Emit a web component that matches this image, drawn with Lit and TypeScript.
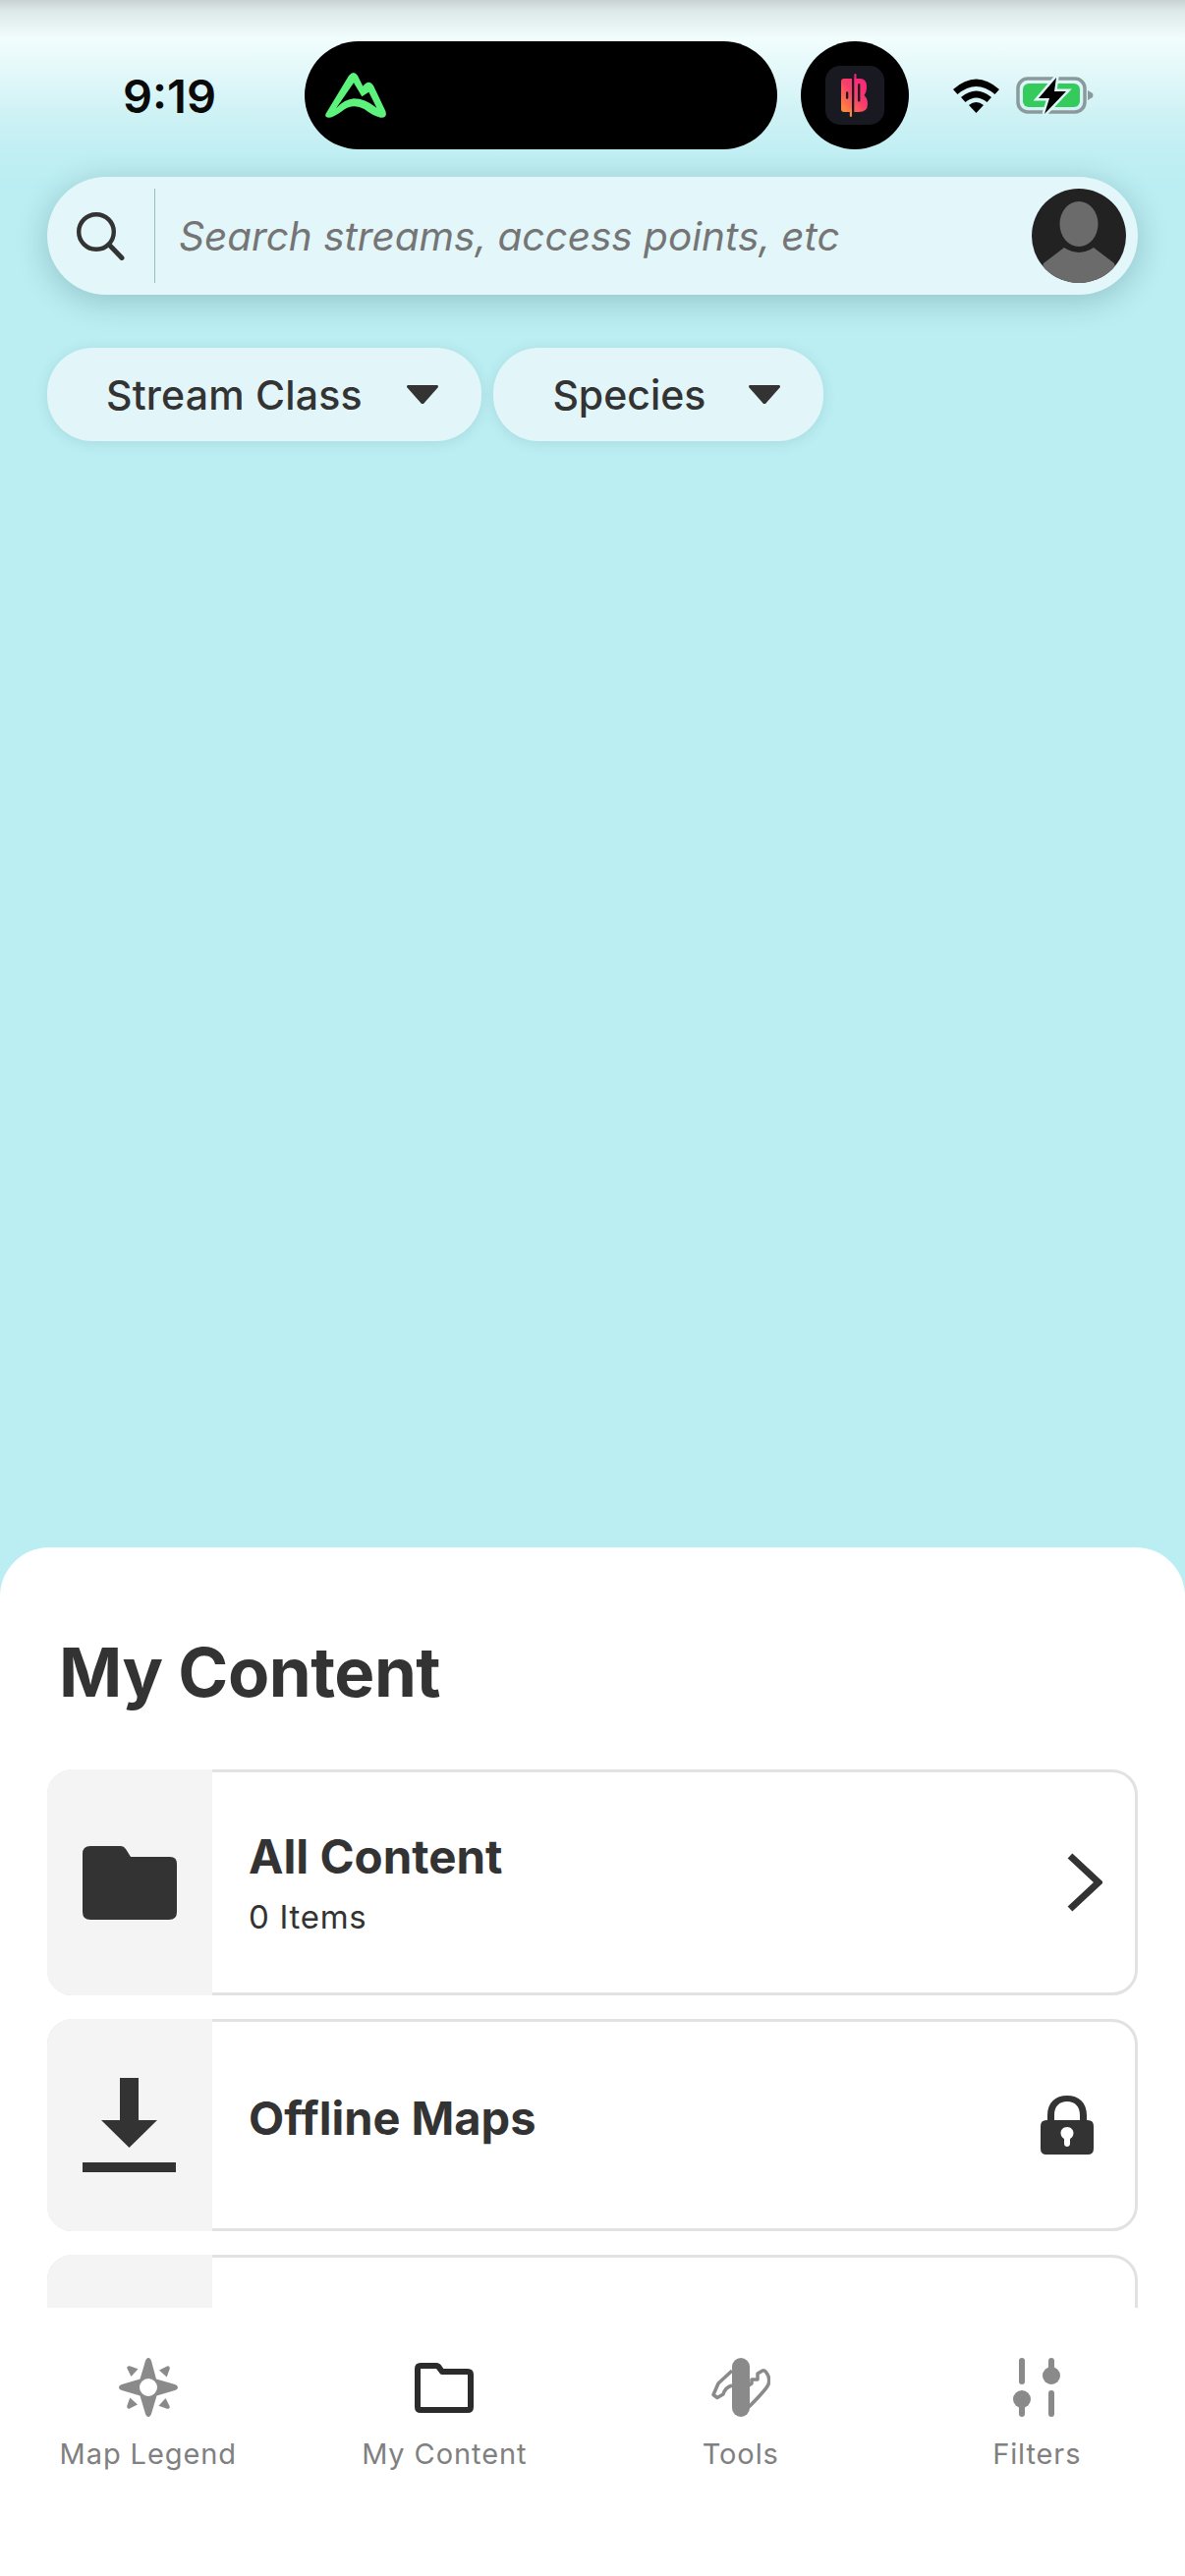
import { LitElement, html, css } from "lit";
import { customElement } from "lit/decorators.js";

@customElement("app-root")
export class AppRoot extends LitElement {
  static styles = css`
    :host {
      display: block;
      width: 1206px;
      height: 2622px;
      overflow: hidden;
      font-family: Inter, "Liberation Sans", sans-serif;
      color: #333;
    }
    svg { display: block; flex: none; }
    .page {
      height: 2622px;
      display: flex;
      flex-direction: column;
      background:
        linear-gradient(180deg, rgba(0,0,0,.17) 0, rgba(0,0,0,.08) 12px, rgba(0,0,0,0) 40px),
        linear-gradient(180deg, #f1fdfd 40px, #e0f7f9 80px, #cff2f5 115px, #c2eff3 150px, #baeef2 190px);
    }
    .status {
      margin-top: 42px;
      height: 110px;
      padding-left: 125px;
      display: flex;
      align-items: center;
      flex: none;
    }
    .time {
      width: 185px;
      font-size: 47px;
      font-weight: 600;
      color: #0a0a0a;
    }
    .island {
      width: 481px;
      height: 110px;
      border-radius: 55px;
      background: #000;
      display: flex;
      align-items: center;
      padding-left: 20px;
      box-sizing: border-box;
    }
    .cam {
      width: 110px;
      height: 110px;
      margin-left: 24px;
      border-radius: 50%;
      background: #000;
      display: flex;
      align-items: center;
      justify-content: center;
    }
    .wifi { margin-left: 45px; }
    .battery { margin-left: 17px; }
    .search {
      flex: none;
      margin: 28px 48px 0;
      height: 120px;
      border-radius: 60px;
      background: #e3f7fa;
      box-shadow: 0 6px 32px rgba(0,40,50,.22);
      display: flex;
      align-items: center;
      padding: 0 12px 0 30px;
    }
    .divider {
      width: 1px;
      height: 96px;
      background: #9dbcc0;
      margin-left: 30px;
    }
    .placeholder {
      flex: 1;
      margin-left: 24px;
      font-size: 40.5px;
      font-style: italic;
      color: #757575;
      white-space: nowrap;
    }
    .avatar { border-radius: 50%; }
    .chips {
      flex: none;
      margin: 54px 48px 0;
      display: flex;
      gap: 12px;
    }
    .chip {
      height: 95px;
      border-radius: 46px;
      background: #e2f6f9;
      box-shadow: 0 2px 14px rgba(0,60,70,.1);
      display: flex;
      align-items: center;
      gap: 45.5px;
      padding: 0 44px 0 60px;
      font-size: 41px;
      font-weight: 500;
      letter-spacing: .2px;
    }
    .chip.tight { gap: 44px; letter-spacing: 0; }
    .spacer { flex: 1; }
    .sheet {
      flex: none;
      height: 1047px;
      background: #fff;
      border-radius: 50px 50px 0 0;
      display: flex;
      flex-direction: column;
      overflow: hidden;
    }
    .content {
      height: 774px;
      overflow: hidden;
      flex: none;
      padding: 0 48px;
      box-sizing: border-box;
    }
    h1 {
      margin: 0;
      padding: 85px 0 0 12px;
      height: 226px;
      box-sizing: border-box;
      font-size: 69px;
      line-height: 85px;
      font-weight: 700;
      letter-spacing: -.5px;
    }
    .card {
      display: flex;
      height: 230px;
      border: 3px solid #e2e2e2;
      border-radius: 26px;
      box-sizing: border-box;
      margin-bottom: 24px;
      position: relative;
      background: #fff;
    }
    .card.short { height: 216px; }
    .thumb {
      width: 168px;
      margin: -3px 0 -3px -3px;
      flex: none;
      background: #f4f4f4;
      border-radius: 26px 0 0 26px;
      display: flex;
      align-items: center;
      justify-content: center;
    }
    .body {
      flex: 1;
      padding-left: 37px;
      display: flex;
      flex-direction: column;
      justify-content: center;
    }
    .title { font-size: 47.5px; font-weight: 700; line-height: 56px; }
    .short .title { margin-top: -14px; font-size: 47px; }
    .sub { font-size: 33px; line-height: 38px; margin-top: 14px; letter-spacing: .7px; }
    .trail {
      flex: none;
      display: flex;
      align-items: center;
    }
    .trail.chev { padding-right: 33px; }
    .trail.lock { padding-right: 42px; }
    .nav {
      flex: 1;
      display: grid;
      grid-template-columns: repeat(4, 1fr);
      padding-top: 51px;
      align-items: start;
    }
    .tab {
      display: flex;
      flex-direction: column;
      align-items: center;
      color: #808080;
      font-size: 29px;
      letter-spacing: .9px;
      line-height: 36px;
      gap: 20px;
    }
  `;

  render() {
    return html`
      <div class="page">
        <div class="status">
          <div class="time">9:19</div>
          <div class="island">
            <svg width="65" height="50" viewBox="90 125 195 150">
              <path fill="#5cf27c" fill-rule="evenodd" d="M96 254 L165 140 Q180 122 192 140 L208 172 Q226 150 240 170 L277 248 Q284 270 262 268 Q240 264 212 242 Q176 222 142 250 Q108 274 96 266 Q91 262 96 254Z M126 240 Q152 212 180 210 Q214 210 250 238 L226 190 L205 204 L180 162Z"/>
            </svg>
          </div>
          <div class="cam">
            <svg width="60" height="60" viewBox="0 0 60 60">
              <defs>
                <linearGradient id="bg" x1="1" y1="0" x2="0" y2="1">
                  <stop offset="0" stop-color="#f7207f"/>
                  <stop offset=".5" stop-color="#f8406a"/>
                  <stop offset="1" stop-color="#fb9438"/>
                </linearGradient>
              </defs>
              <rect width="60" height="60" rx="15" fill="#191922"/>
              <path fill="url(#bg)" d="M19 13 H35 Q42 13 42 21 Q42 27 39.500 30 Q43 33 43 39 Q43 47 34 47 H19 Q16 47 16 44 V16 Q16 13 19 13Z"/>
              <rect x="27" y="10" width="2.300" height="37" fill="#191922"/>
              <rect x="29.300" y="8" width="2.200" height="8" rx="1" fill="#f7207f"/>
              <rect x="24.800" y="44" width="2.200" height="8" rx="1" fill="#fb8a3c"/>
              <rect x="21" y="26.300" width="2.300" height="7.500" rx="1.100" fill="#191922"/>
              <rect x="33" y="18" width="2.400" height="18.500" rx="1.200" fill="#191922"/>
            </svg>
          </div>
          <svg class="wifi" width="47" height="35" viewBox="0 0 47 35">
            <path d="M0 11 Q23.500 -10 47 11 L42.500 16 Q23.500 0 4.500 16Z M8 19 Q23.500 6 39 19 L34.500 24 Q23.500 15 12.500 24Z M16 27 Q23.500 21 31 27 L23.500 35Z" fill="#000"/>
          </svg>
          <svg class="battery" width="79" height="40" viewBox="0 0 79 40">
            <rect x="2" y="3" width="68" height="34" rx="10" fill="none" stroke="#8a9a9c" stroke-width="3.500"/>
            <rect x="7" y="8" width="58" height="24" rx="6" fill="#34cb5c"/>
            <path d="M73 15 L78 18 Q79 20 78 22 L73 25Z" fill="#8a9a9c"/>
            <path d="M41 2 L23 23 L34 23 L29 39 L51 16 L39 16Z" fill="#000" stroke="#dff7f9" stroke-width="5" paint-order="stroke"/>
          </svg>
        </div>

        <div class="search">
          <svg width="49" height="49" viewBox="0 0 49 49">
            <circle cx="20" cy="20" r="17.800" fill="none" stroke="#333" stroke-width="4.400"/>
            <path d="M33 33 L46 46.500" stroke="#333" stroke-width="5" stroke-linecap="round"/>
          </svg>
          <div class="divider"></div>
          <div class="placeholder">Search streams, access points, etc</div>
          <svg class="avatar" width="96" height="96" viewBox="0 0 96 96">
            <rect width="96" height="96" fill="#222"/>
            <ellipse cx="48" cy="36" rx="19.500" ry="23" fill="#6b6b6b"/>
            <path d="M12 76 L33 60 Q48 70 63 60 L84 76 L90 96 H6Z" fill="#6b6b6b"/>
          </svg>
        </div>

        <div class="chips">
          <div class="chip">Stream Class
            <svg width="32" height="19" viewBox="0 0 32 19"><path d="M1 0 H31 Q32 0 32 2 L17 19 H15 L0 2 Q0 0 1 0Z" fill="#333"/></svg>
          </div>
          <div class="chip tight">Species
            <svg width="32" height="19" viewBox="0 0 32 19"><path d="M1 0 H31 Q32 0 32 2 L17 19 H15 L0 2 Q0 0 1 0Z" fill="#333"/></svg>
          </div>
        </div>

        <div class="spacer"></div>

        <div class="sheet">
          <div class="content">
            <h1>My Content</h1>
            <div class="card">
              <div class="thumb">
                <svg width="96" height="75" viewBox="0 0 96 75">
                  <path d="M8 0 H39 Q42 0 44 3 L49 11 H89 Q96 11 96 18 V67 Q96 75 88 75 H8 Q0 75 0 67 V8 Q0 0 8 0Z" fill="#333"/>
                </svg>
              </div>
              <div class="body">
                <div class="title">All Content</div>
                <div class="sub">0 Items</div>
              </div>
              <div class="trail chev">
                <svg width="36" height="60" viewBox="0 0 36 60">
                  <path d="M3 3 L32 30 L3 57" fill="none" stroke="#333" stroke-width="7"/>
                </svg>
              </div>
            </div>
            <div class="card short">
              <div class="thumb">
                <svg width="96" height="96" viewBox="0 0 96 96">
                  <path d="M38 0 H57 V43 H76 L47.500 71 L19 43 H38Z M0 86 H95 V96 H0Z" fill="#333"/>
                </svg>
              </div>
              <div class="body">
                <div class="title">Offline Maps</div>
              </div>
              <div class="trail lock">
                <svg width="54" height="60" viewBox="0 0 54 60">
                  <path fill-rule="evenodd" fill="#333" d="M7 25 V20 C7 7 15 0 27 0 C39 0 47 7 47 20 V25 H48 Q54 25 54 31 V54 Q54 60 48 60 H6 Q0 60 0 54 V31 Q0 25 6 25Z M14 25 H40 V20 C40 11 35 6 27 6 C19 6 14 11 14 20Z M27 32 C23 32 20.500 35 20.500 38 C20.500 41 22 43 24 44 V49 C24 53 30 53 30 49 V44 C32 43 33.500 41 33.500 38 C33.500 35 31 32 27 32Z"/>
                </svg>
              </div>
            </div>
            <div class="card short"><div class="thumb"></div></div>
          </div>

          <div class="nav">
            <div class="tab">
              <svg width="60" height="60" viewBox="0 0 60 60" fill="#8a8a8a">
                <path fill-rule="evenodd" d="M30 0 C31.500 0 32.500 1.500 33 3 L38 21.500 L57 27 C58.500 27.500 60 28.500 60 30 C60 31.500 58.500 32.500 57 33 L38.500 38.500 L33 57 C32.500 58.500 31.500 60 30 60 C28.500 60 27.500 58.500 27 57 L21.500 38.500 L3 33 C1.500 32.500 0 31.500 0 30 C0 28.500 1.500 27.500 3 27 L21.500 21.500 L27 3 C27.500 1.500 28.500 0 30 0Z M30 21 A9 9 0 1 0 30 39 A9 9 0 1 0 30 21Z"/>
                <path d="M41 12.500 L49 8.500 Q52 7.500 51.800 11 L48.700 19.500Z"/>
                <path d="M41 12.500 L49 8.500 Q52 7.500 51.800 11 L48.700 19.500Z" transform="rotate(90 30 30)"/>
                <path d="M41 12.500 L49 8.500 Q52 7.500 51.800 11 L48.700 19.500Z" transform="rotate(180 30 30)"/>
                <path d="M41 12.500 L49 8.500 Q52 7.500 51.800 11 L48.700 19.500Z" transform="rotate(270 30 30)"/>
              </svg>
              <span>Map Legend</span>
            </div>
            <div class="tab">
              <svg width="60" height="60" viewBox="0 0 60 60">
                <path d="M6 8 H22 Q24 8 25 10 L28 14 H54 Q57 14 57 17 V50 Q57 53 54 53 H6 Q3 53 3 50 V11 Q3 8 6 8Z" fill="none" stroke="#2b2b2b" stroke-width="6" stroke-linejoin="round"/>
              </svg>
              <span>My Content</span>
            </div>
            <div class="tab">
              <svg width="60" height="60" viewBox="0 0 60 60">
                <path d="M21 13 L7 26 L2 37.500 L6 40.500 L12 37 Q14 30 21 28" fill="none" stroke="#8a8a8a" stroke-width="3.500" stroke-linejoin="round"/>
                <path d="M38 28 L41 26 V22 H47 V16 L52 13 Q54 12 56 15 Q60 20 58 27 Q56 32 38 50" fill="none" stroke="#8a8a8a" stroke-width="3.500" stroke-linejoin="round"/>
                <rect x="21" y="0" width="18" height="60" rx="9" fill="#8a8a8a"/>
              </svg>
              <span>Tools</span>
            </div>
            <div class="tab">
              <svg width="60" height="60" viewBox="0 0 60 60" fill="#8a8a8a">
                <rect x="12" y="0" width="6" height="27" rx="3"/>
                <circle cx="15" cy="42" r="9"/>
                <rect x="12" y="45" width="6" height="15" rx="3"/>
                <rect x="42" y="0" width="6" height="15" rx="3"/>
                <circle cx="45" cy="18" r="9"/>
                <rect x="42" y="33" width="6" height="27" rx="3"/>
              </svg>
              <span>Filters</span>
            </div>
          </div>
        </div>
      </div>
    `;
  }
}
